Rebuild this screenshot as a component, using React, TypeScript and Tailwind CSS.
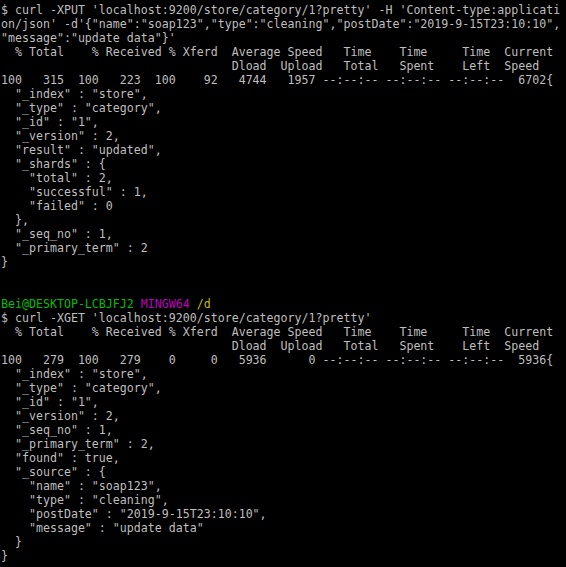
import React from "react";

const before: string[] = [
  `$ curl -XPUT 'localhost:9200/store/category/1?pretty' -H 'Content-type:applicati`,
  `on/json' -d'{"name":"soap123","type":"cleaning","postDate":"2019-9-15T23:10:10",`,
  `"message":"update data"}'`,
  `  % Total    % Received % Xferd  Average Speed   Time    Time     Time  Current`,
  `                                 Dload  Upload   Total   Spent    Left  Speed`,
  `100   315  100   223  100    92   4744   1957 --:--:-- --:--:-- --:--:--  6702{`,
  `  "_index" : "store",`,
  `  "_type" : "category",`,
  `  "_id" : "1",`,
  `  "_version" : 2,`,
  `  "result" : "updated",`,
  `  "_shards" : {`,
  `    "total" : 2,`,
  `    "successful" : 1,`,
  `    "failed" : 0`,
  `  },`,
  `  "_seq_no" : 1,`,
  `  "_primary_term" : 2`,
  `}`,
  ``,
  ``,
];

const after: string[] = [
  `$ curl -XGET 'localhost:9200/store/category/1?pretty'`,
  `  % Total    % Received % Xferd  Average Speed   Time    Time     Time  Current`,
  `                                 Dload  Upload   Total   Spent    Left  Speed`,
  `100   279  100   279    0     0   5936      0 --:--:-- --:--:-- --:--:--  5936{`,
  `  "_index" : "store",`,
  `  "_type" : "category",`,
  `  "_id" : "1",`,
  `  "_version" : 2,`,
  `  "_seq_no" : 1,`,
  `  "_primary_term" : 2,`,
  `  "found" : true,`,
  `  "_source" : {`,
  `    "name" : "soap123",`,
  `    "type" : "cleaning",`,
  `    "postDate" : "2019-9-15T23:10:10",`,
  `    "message" : "update data"`,
  `  }`,
  `}`,
];

function Line({ children }: { children: React.ReactNode }) {
  return <div className="h-[14px] leading-[14px] whitespace-pre">{children}</div>;
}

export default function App() {
  return (
    <div
      className="w-[566px] h-[567px] overflow-hidden bg-black text-[#bfbfbf] pt-[3px] pl-[1px] text-[11.627px]"
      style={{ fontFamily: '"DejaVu Sans Mono", "Liberation Mono", monospace' }}
    >
      {before.map((l, i) => (
        <Line key={"b" + i}>{l === "" ? "\u00a0" : l}</Line>
      ))}
      <Line>
        <span className="text-[#00bf00]">Bei@DESKTOP-LCBJFJ2</span>{" "}
        <span className="text-[#bf00bf]">MINGW64</span>{" "}
        <span className="text-[#bfbf00]">/d</span>
      </Line>
      {after.map((l, i) => (
        <Line key={"a" + i}>{l}</Line>
      ))}
    </div>
  );
}
